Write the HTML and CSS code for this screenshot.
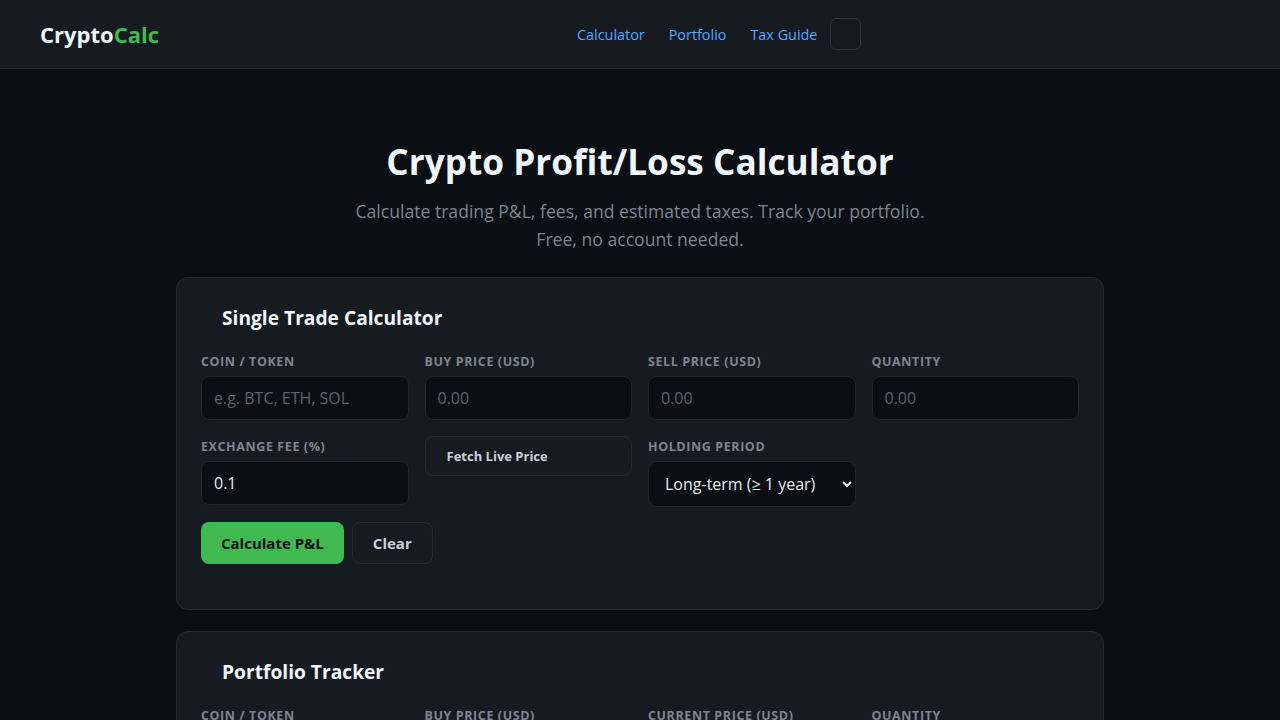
FILE: index.html
```html
<!DOCTYPE html>
<html lang="en">
<head>
    <meta charset="UTF-8" />
    <meta name="viewport" content="width=device-width, initial-scale=1.0" />
    <title>CryptoCalc - Crypto Profit/Loss Calculator</title>
    <link rel="stylesheet" href="styles.css">
</head>
<body>
    <header class="site-header">
        <div class="header-inner">
            <a href="#" class="logo">Crypto<span>Calc</span></a>
            <nav class="nav">
                <a href="#calculator">Calculator</a>
                <a href="#portfolio">Portfolio</a>
                <a href="#tax">Tax Guide</a>
                <button id="theme-toggle" class="theme-toggle" aria-label="Toggle theme"></button>
            </nav>
        </div>
    </header>

    <main class="container">
        <section class="hero">
            <h1>Crypto Profit/Loss Calculator</h1>
            <p>Calculate trading P&amp;L, fees, and estimated taxes. Track your portfolio. Free, no account needed.</p>
        </section>

        <section class="card" id="calculator">
            <h2>Single Trade Calculator</h2>
            <div class="form-grid">
                <div class="field">
                    <label for="coin">Coin / Token</label>
                    <input id="coin" type="text" placeholder="e.g. BTC, ETH, SOL">
                </div>
                <div class="field">
                    <label for="buy-price">Buy Price (USD)</label>
                    <input id="buy-price" type="number" placeholder="0.00">
                </div>
                <div class="field">
                    <label for="sell-price">Sell Price (USD)</label>
                    <input id="sell-price" type="number" placeholder="0.00">
                </div>
                <div class="field">
                    <label for="quantity">Quantity</label>
                    <input id="quantity" type="number" placeholder="0.00">
                </div>
                <div class="field">
                    <label for="fee">Exchange Fee (%)</label>
                    <input id="fee" type="number" value="0.1">
                </div>
                <div class="field">
                    <button id="fetch-price" class="btn-fetch">Fetch Live Price</button>
                </div>
                <div class="field">
                    <label for="holding">Holding Period</label>
                    <select id="holding">
                        <option value="long">Long-term (&ge; 1 year)</option>
                        <option value="short">Short-term (&lt; 1 year)</option>
                    </select>
                </div>
            </div>
            <div class="actions">
                <button class="btn btn-primary">Calculate P&amp;L</button>
                <button class="btn btn-secondary">Clear</button>
            </div>
        </section>

        <section class="card" id="portfolio">
            <h2>Portfolio Tracker</h2>
            <div class="form-grid">
                <div class="field">
                    <label for="p-coin">Coin / Token</label>
                    <input id="p-coin" type="text" placeholder="e.g. BTC">
                </div>
                <div class="field">
                    <label for="p-buy">Buy Price (USD)</label>
                    <input id="p-buy" type="number" placeholder="0.00">
                </div>
                <div class="field">
                    <label for="p-current">Current Price (USD)</label>
                    <input id="p-current" type="number" placeholder="0.00">
                </div>
                <div class="field">
                    <label for="p-qty">Quantity</label>
                    <input id="p-qty" type="number" placeholder="0.00">
                </div>
            </div>
        </section>
    </main>
</body>
</html>
```

FILE: styles.css
```css
* {
    box-sizing: border-box;
}
body {
    margin: 0;
    font-family: 'Open Sans', 'Noto Sans', sans-serif;
    background-color: #0b0e14;
    color: #e6edf3;
}

/* header */
.site-header {
    background-color: #161b22;
    border-bottom: 1px solid #21262d;
}
.header-inner {
    height: 68px;
    padding: 0 40px;
    display: flex;
    align-items: center;
}
.logo {
    font-size: 22px;
    font-weight: 700;
    color: #f0f6fc;
    text-decoration: none;
    margin-top: -1px;
}
.logo span {
    color: #3fb950;
}
.nav {
    margin-left: 406px;
    display: flex;
    align-items: center;
}
.nav a {
    color: #58a6ff;
    text-decoration: none;
    font-size: 14.4px;
    padding: 6px 12px;
}
.theme-toggle {
    margin-left: 1px;
    width: 31px;
    height: 32px;
    border: 1px solid #30363d;
    border-radius: 6px;
    background: transparent;
    cursor: pointer;
}

/* main */
.container {
    max-width: 928px;
    margin: 0 auto;
    padding: 71px 0 40px;
}
.hero {
    text-align: center;
    margin-bottom: 24px;
}
.hero h1 {
    margin: 0 0 14px;
    font-size: 35.2px;
    line-height: 43px;
    font-weight: 700;
    color: #f0f6fc;
}
.hero p {
    margin: 0 auto;
    max-width: 600px;
    font-size: 17.6px;
    line-height: 28px;
    color: #7d8590;
}

.card {
    background-color: #161b22;
    border: 1px solid #262c36;
    border-radius: 12px;
    padding: 24px;
    margin-bottom: 21px;
}
.card h2 {
    margin: 0 0 18px;
    padding-left: 21px;
    font-size: 19.2px;
    line-height: 32px;
    font-weight: 700;
    color: #f0f6fc;
}

.form-grid {
    display: grid;
    grid-template-columns: repeat(4, minmax(0, 1fr));
    gap: 17px 16px;
}
.field {
    display: flex;
    flex-direction: column;
    min-width: 0;
}
.field label {
    font-size: 12.5px;
    line-height: 19px;
    font-weight: 700;
    letter-spacing: 0.6px;
    text-transform: uppercase;
    color: #7d8590;
    margin-bottom: 5px;
}
.field input,
.field select {
    width: 100%;
    height: 44px;
    padding: 0 12px;
    font-family: inherit;
    font-size: 16px;
    color: #e6edf3;
    background-color: #0b0e14;
    border: 1px solid #21262d;
    border-radius: 8px;
    outline: none;
}
.field select {
    height: 46px;
    padding: 0 10px 0 12px;
}
.field input::placeholder {
    color: #5c636c;
}
.field input:focus,
.field select:focus {
    border-color: #58a6ff;
}
.field input[type=number] {
    -moz-appearance: textfield;
}
.field input::-webkit-outer-spin-button,
.field input::-webkit-inner-spin-button {
    -webkit-appearance: none;
    margin: 0;
}

.btn-fetch {
    height: 40px;
    margin-top: -1px;
    padding: 0 21px;
    text-align: left;
    font-family: inherit;
    font-size: 13px;
    font-weight: 700;
    color: #c9d1d9;
    background-color: #161b22;
    border: 1px solid #262c36;
    border-radius: 8px;
    cursor: pointer;
}

.actions {
    display: flex;
    gap: 8px;
    margin-top: 15px;
    margin-bottom: 21px;
}
.btn {
    height: 42px;
    padding: 0 20px;
    font-family: inherit;
    font-size: 15px;
    font-weight: 700;
    border-radius: 8px;
    cursor: pointer;
}
.btn-primary {
    background-color: #3fb950;
    color: #0b0e14;
    border: none;
}
.btn-primary:hover {
    background-color: #46c35a;
}
.btn-secondary {
    background-color: transparent;
    color: #c9d1d9;
    border: 1px solid #262c36;
}
```
